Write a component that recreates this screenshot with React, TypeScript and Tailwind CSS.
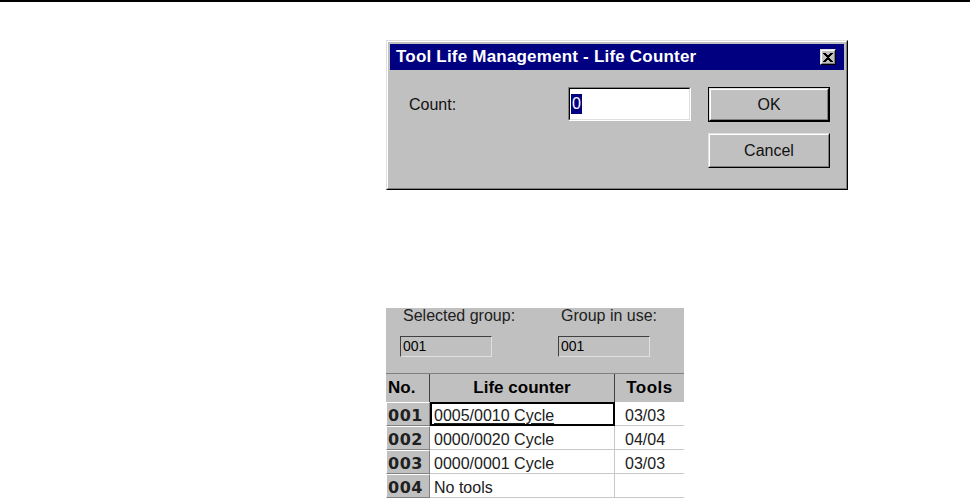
import React from "react";

const sans = { fontFamily: '"Liberation Sans", Arial, sans-serif' };
const wideBold = { fontFamily: '"DejaVu Sans", "Liberation Sans", sans-serif' };

function Bevel95({ children, className = "" }: { children?: React.ReactNode; className?: string }) {
  return (
    <div className={`border border-t-[#dfdfdf] border-l-[#dfdfdf] border-r-black border-b-black ${className}`}>
      <div className="h-full w-full border border-t-white border-l-white border-r-[#808080] border-b-[#808080]">
        {children}
      </div>
    </div>
  );
}

function Sunken({ children, className = "" }: { children?: React.ReactNode; className?: string }) {
  return (
    <div className={`border border-t-[#808080] border-l-[#808080] border-r-white border-b-white ${className}`}>
      <div className="h-full w-full border border-t-black border-l-black border-r-[#dfdfdf] border-b-[#dfdfdf]">
        {children}
      </div>
    </div>
  );
}

function Button({ label, focused }: { label: string; focused?: boolean }) {
  const inner = (
    <Bevel95 className="h-full w-full bg-[#c0c0c0]">
      <div className="flex h-full items-center justify-center text-[16px] text-[#101010]">{label}</div>
    </Bevel95>
  );
  return focused ? (
    <div className="h-[35px] w-[122px] border border-black">{inner}</div>
  ) : (
    <div className="h-[35px] w-[122px]">{inner}</div>
  );
}

function LifeCounterDialog() {
  return (
    <Bevel95 className="ml-[386px] mt-[38px] h-[150px] w-[462px] bg-[#c0c0c0]">
      <div className="p-[2px]">
        <div className="flex h-[26px] items-center justify-between bg-[#000080] pl-[6px] pr-[8px]">
          <span className="text-[17px] font-bold tracking-[0.2px] text-white">Tool Life Management - Life Counter</span>
          <Bevel95 className="h-[16px] w-[16px] bg-[#c0c0c0]">
            <div className="flex h-full items-center justify-center">
              <svg width="10" height="9" viewBox="0 0 10 9" shapeRendering="crispEdges">
                <path
                  d="M0 0h3v1h1v1h2V1h1V0h3v1H9v1H8v1H7v1H6v1h1v1h1v1h1v1h1v1H7V8H6V7H4v1H3v1H0V8h1V7h1V6h1V5h1V4H3V3H2V2H1V1H0z"
                  fill="black"
                />
              </svg>
            </div>
          </Bevel95>
        </div>
        <div className="flex pl-[19px] pt-[17px]">
          <div className="w-[159px] pt-[6px] text-[16px] text-[#101010]">Count:</div>
          <Sunken className="h-[34px] w-[123px] bg-white">
            <div className="flex h-full items-center bg-white pl-[1px]">
              <span className="bg-[#000080] px-[1px] text-[16px] leading-[20px] text-white">0</span>
            </div>
          </Sunken>
          <div className="ml-[17px] flex flex-col gap-[11px]">
            <Button label="OK" focused />
            <Button label="Cancel" />
          </div>
        </div>
      </div>
    </Bevel95>
  );
}

const rows = [
  { no: "001", life: "0005/0010 Cycle", tools: "03/03" },
  { no: "002", life: "0000/0020 Cycle", tools: "04/04" },
  { no: "003", life: "0000/0001 Cycle", tools: "03/03" },
  { no: "004", life: "No tools", tools: "" },
];

function GroupField({ label, value, className = "" }: { label: string; value: string; className?: string }) {
  return (
    <div className={`flex flex-col ${className}`}>
      <div className="pl-[3px] text-[16px] leading-[16px] text-[#202020]">{label}</div>
      <div className="mt-[12px] h-[21px] w-[92px] border border-t-[#404040] border-l-[#404040] border-r-[#e0e0e0] border-b-[#e0e0e0] bg-[#c0c0c0] pl-[2px] text-[14px] leading-[19px] text-black">
        {value}
      </div>
    </div>
  );
}

function LifeCounterTable() {
  return (
    <div className="ml-[386px] mt-[118px] w-[298px] bg-[#c0c0c0]">
      <div className="flex pb-[16px] pl-[14px] pt-[0px]">
        <GroupField label="Selected group:" value="001" className="w-[158px] shrink-0" />
        <GroupField label="Group in use:" value="001" />
      </div>
      <div className="grid grid-cols-[44px_185px_69px] border-t border-[#808080]">
        <div className="flex h-[28px] items-center border-r border-[#404040] pl-[2px] text-[17px] font-bold text-black">No.</div>
        <div className="flex h-[28px] items-center justify-center border-r border-[#404040] text-[17px] font-bold text-black">
          Life counter
        </div>
        <div className="flex h-[28px] items-center justify-center text-[17px] font-bold tracking-[0.5px] text-black">Tools</div>
        {rows.map((r, i) => (
          <React.Fragment key={r.no}>
            <div
              className="flex h-[24px] items-center border border-t-white border-l-white border-r-[#808080] border-b-[#808080] bg-[#c0c0c0] pl-[1px] pt-[3px] text-[16px] font-bold tracking-[0.5px] text-[#202020]"
              style={wideBold}
            >
              {r.no}
            </div>
            {i === 0 ? (
              <div className="flex h-[24px] items-center border-2 border-black bg-white pl-[2px] pt-[3px] text-[16px] text-[#202020] underline decoration-[#202020] underline-offset-[2px]">
                {r.life}
              </div>
            ) : (
              <div className="flex h-[24px] items-center border-b border-r border-[#c8c8c8] bg-white pl-[4px] pt-[4px] text-[16px] text-[#202020]">
                {r.life}
              </div>
            )}
            <div className="flex h-[24px] items-center border-b border-[#c8c8c8] bg-white pl-[10px] pt-[4px] text-[16px] text-[#202020]">
              {r.tools}
            </div>
          </React.Fragment>
        ))}
      </div>
    </div>
  );
}

export default function App() {
  return (
    <div className="h-[502px] w-[970px] overflow-hidden bg-white" style={sans}>
      <div className="h-[2px] w-full bg-black" />
      <LifeCounterDialog />
      <LifeCounterTable />
    </div>
  );
}
